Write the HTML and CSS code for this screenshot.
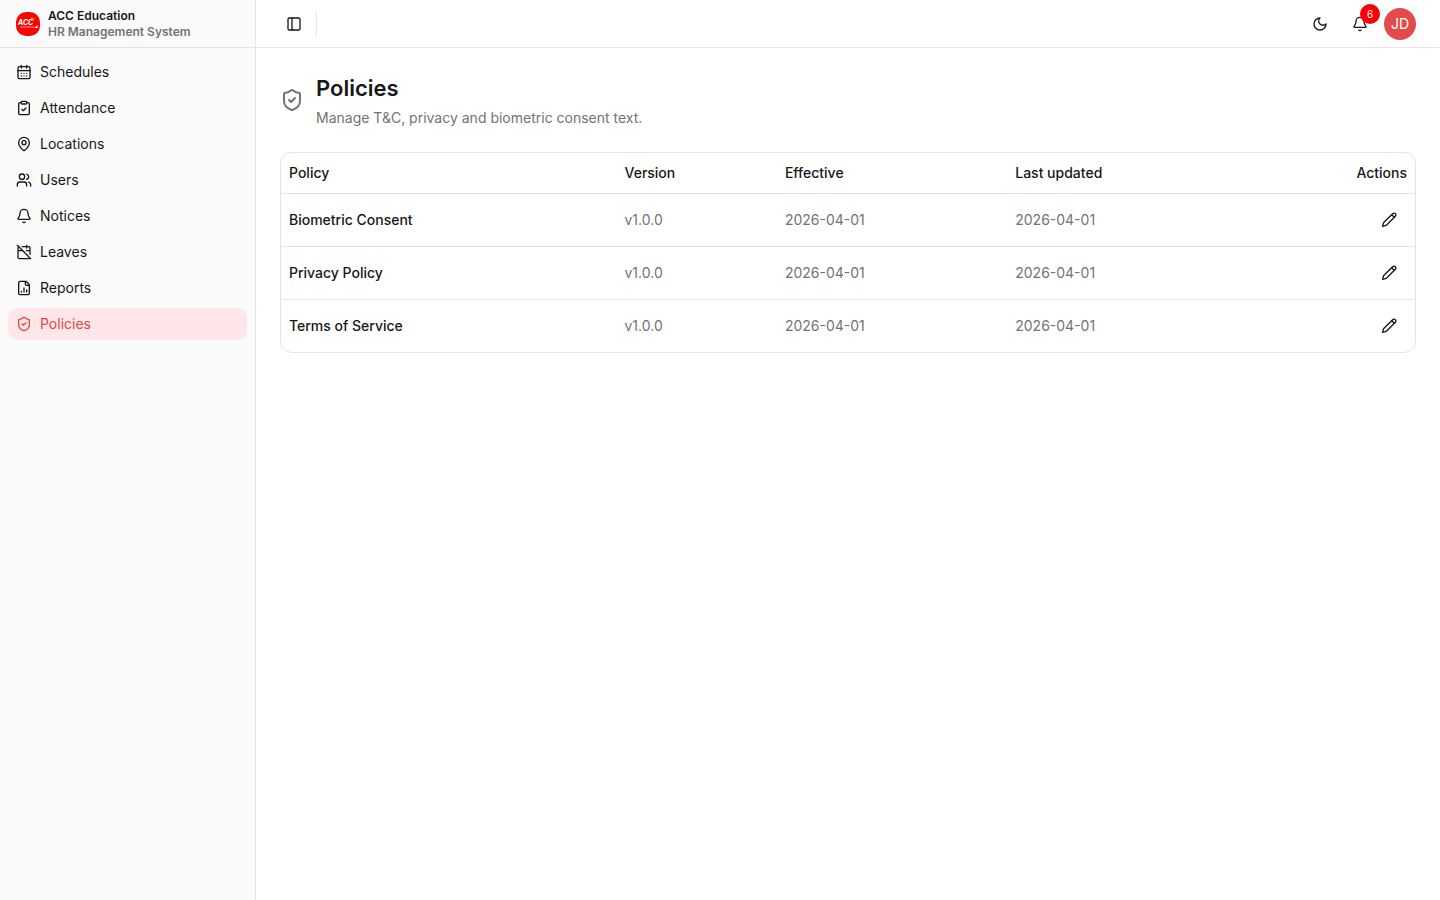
FILE: index.html
```
<!DOCTYPE html>
<html lang="en">
<head>
    <meta charset="UTF-8">
    <meta name="viewport" content="width=device-width, initial-scale=1.0">
    <title>Policies - ACC Education</title>
    <link rel="stylesheet" href="styles.css">
</head>
<body>
    <!-- shared icons -->
    <svg class="sprite" aria-hidden="true">
        <symbol id="bell" viewBox="0 0 24 24">
            <path d="M10.268 21a2 2 0 0 0 3.464 0"/>
            <path d="M3.262 15.326A1 1 0 0 0 4 17h16a1 1 0 0 0 .74-1.673C19.41 13.956 18 12.499 18 8A6 6 0 0 0 6 8c0 4.499-1.411 5.956-2.738 7.326"/>
        </symbol>
        <symbol id="shield" viewBox="0 0 24 24">
            <path d="M20 13c0 5-3.5 7.5-7.66 8.95a1 1 0 0 1-.67-.01C7.5 20.5 4 18 4 13V6a1 1 0 0 1 1-1c2 0 4.5-1.2 6.24-2.72a1.17 1.17 0 0 1 1.52 0C14.51 3.81 17 5 19 5a1 1 0 0 1 1 1z"/>
            <path d="m9 12 2 2 4-4"/>
        </symbol>
        <symbol id="pencil" viewBox="0 0 24 24">
            <path d="M21.500 2.500a2.800 2.800 0 0 0-4 0L4.500 15.500a4 4 0 0 0-1 1.800L2.500 21.500l4.200-1a4 4 0 0 0 1.800-1L21.500 6.500a2.800 2.800 0 0 0 0-4z"/>
            <path d="m16 4 4 4"/>
        </symbol>
    </svg>

    <aside class="sidebar">
        <a class="brand" href="#">
            <svg class="logo" viewBox="0 0 24 24" aria-hidden="true">
                <rect width="24" height="24" rx="10" fill="#f80505"/>
                <text x="2" y="13" class="logo_text">ACC</text>
                <path d="M14.500 5.500l4 1-2 3z" fill="#ffb000"/>
                <path d="M4.500 15h14" stroke="#ffb3b3" stroke-dasharray="1.500 .4"/>
                <path d="M18.500 16l3-3v3z" fill="#fff"/>
            </svg>
            <span class="brand_text">
                <span class="brand_name">ACC Education</span>
                <span class="brand_sub">HR Management System</span>
            </span>
        </a>
        <nav class="menu">
            <a href="#">
                <svg class="icon" viewBox="0 0 24 24"><path d="M8 2v4M16 2v4M3 10h18M8 14h.01M12 14h.01M16 14h.01M8 18h.01M12 18h.01M16 18h.01"/><rect width="18" height="18" x="3" y="4" rx="2"/></svg>
                Schedules
            </a>
            <a href="#">
                <svg class="icon" viewBox="0 0 24 24"><rect width="8" height="4" x="8" y="2" rx="1"/><path d="M16 4h2a2 2 0 0 1 2 2v14a2 2 0 0 1-2 2H6a2 2 0 0 1-2-2V6a2 2 0 0 1 2-2h2"/><path d="m9 14 2 2 4-4"/></svg>
                Attendance
            </a>
            <a href="#">
                <svg class="icon" viewBox="0 0 24 24"><path d="M20 10c0 4.993-5.539 10.193-7.399 11.799a1 1 0 0 1-1.202 0C9.539 20.193 4 14.993 4 10a8 8 0 0 1 16 0"/><circle cx="12" cy="10" r="3"/></svg>
                Locations
            </a>
            <a href="#">
                <svg class="icon" viewBox="0 0 24 24"><path d="M16 21v-2a4 4 0 0 0-4-4H6a4 4 0 0 0-4 4v2"/><circle cx="9" cy="7" r="4"/><path d="M22 21v-2a4 4 0 0 0-3-3.870M16 3.128a4 4 0 0 1 0 7.744"/></svg>
                Users
            </a>
            <a href="#">
                <svg class="icon"><use href="#bell"/></svg>
                Notices
            </a>
            <a href="#">
                <svg class="icon" viewBox="0 0 24 24"><path d="M4.200 4.200A2 2 0 0 0 3 6v14a2 2 0 0 0 2 2h14a2 2 0 0 0 1.820-1.180M21 15.500V6a2 2 0 0 0-2-2H9.500M16 2v4M3 10h7M21 10h-5.500M2 2l20 20"/></svg>
                Leaves
            </a>
            <a href="#">
                <svg class="icon" viewBox="0 0 24 24"><path d="M15 2H6a2 2 0 0 0-2 2v16a2 2 0 0 0 2 2h12a2 2 0 0 0 2-2V7Z"/><path d="M14 2v4a2 2 0 0 0 2 2h4M8 18v-1M12 18v-6M16 18v-3"/></svg>
                Reports
            </a>
            <a href="#" class="active" aria-current="page">
                <svg class="icon"><use href="#shield"/></svg>
                Policies
            </a>
        </nav>
    </aside>

    <div class="page">
        <header class="topbar">
            <div class="topbar_left">
                <button class="icon_button small" aria-label="Toggle sidebar">
                    <svg class="icon" viewBox="0 0 24 24"><rect width="18" height="18" x="3" y="3" rx="2"/><path d="M9 3v18"/></svg>
                </button>
                <span class="separator"></span>
            </div>
            <div class="topbar_right">
                <button class="icon_button medium" aria-label="Toggle theme">
                    <svg class="icon" viewBox="0 0 24 24"><path d="M12 3a6 6 0 0 0 9 9 9 9 0 1 1-9-9Z"/></svg>
                </button>
                <button class="icon_button medium" aria-label="Notifications">
                    <svg class="icon"><use href="#bell"/></svg>
                    <span class="badge">6</span>
                </button>
                <button class="avatar" aria-label="Account">JD</button>
            </div>
        </header>

        <main>
            <div class="heading">
                <svg class="icon large"><use href="#shield"/></svg>
                <div>
                    <h1>Policies</h1>
                    <p>Manage T&amp;C, privacy and biometric consent text.</p>
                </div>
            </div>

            <div class="table_box">
                <table>
                    <thead>
                        <tr>
                            <th>Policy</th>
                            <th>Version</th>
                            <th>Effective</th>
                            <th>Last updated</th>
                            <th class="actions">Actions</th>
                        </tr>
                    </thead>
                    <tbody>
                        <tr>
                            <td class="name">Biometric Consent</td>
                            <td>v1.0.0</td>
                            <td>2026-04-01</td>
                            <td>2026-04-01</td>
                            <td class="actions"><button class="icon_button" aria-label="Edit Biometric Consent"><svg class="icon"><use href="#pencil"/></svg></button></td>
                        </tr>
                        <tr>
                            <td class="name">Privacy Policy</td>
                            <td>v1.0.0</td>
                            <td>2026-04-01</td>
                            <td>2026-04-01</td>
                            <td class="actions"><button class="icon_button" aria-label="Edit Privacy Policy"><svg class="icon"><use href="#pencil"/></svg></button></td>
                        </tr>
                        <tr>
                            <td class="name">Terms of Service</td>
                            <td>v1.0.0</td>
                            <td>2026-04-01</td>
                            <td>2026-04-01</td>
                            <td class="actions"><button class="icon_button" aria-label="Edit Terms of Service"><svg class="icon"><use href="#pencil"/></svg></button></td>
                        </tr>
                    </tbody>
                </table>
            </div>
        </main>
    </div>
</body>
</html>
```
FILE: styles.css
```
* {
    box-sizing: border-box;
}

body {
    display: flex;
    min-height: 100vh;
    margin: 0;
    background-color: #fff;
    color: #171717;
    font-family: Inter, sans-serif;
    font-size: 14px;
    line-height: 20px;
}

a {
    color: inherit;
    text-decoration: none;
}

button {
    padding: 0;
    border: none;
    background: none;
    color: inherit;
    font: inherit;
    cursor: pointer;
}

.sprite {
    position: absolute;
    width: 0;
    height: 0;
}

.icon {
    flex-shrink: 0;
    width: 16px;
    height: 16px;
    fill: none;
    stroke: currentColor;
    stroke-width: 2;
    stroke-linecap: round;
    stroke-linejoin: round;
}

.icon.large {
    width: 24px;
    height: 24px;
    color: #737373;
}

/* sidebar */
.sidebar {
    flex: 0 0 256px;
    border-right: 1px solid #e5e5e5;
    background-color: #fafafa;
}

.brand {
    display: flex;
    align-items: center;
    gap: 8px;
    height: 48px;
    padding: 0 16px;
    border-bottom: 1px solid #e5e5e5;
    font-size: 12px;
    font-weight: 600;
    line-height: 16px;
}

.logo {
    width: 24px;
    height: 24px;
    fill: none;
}

.logo_text {
    fill: #fff;
    font-size: 7px;
    font-style: italic;
    font-weight: 700;
}

.brand_text {
    display: flex;
    flex-direction: column;
}

.brand_sub {
    color: #737373;
}

.menu {
    display: flex;
    flex-direction: column;
    gap: 4px;
    padding: 8px;
}

.menu a {
    display: flex;
    align-items: center;
    gap: 8px;
    height: 32px;
    padding: 0 8px;
    border-radius: 10px;
}

.menu .active {
    background-color: #ffe6e8;
    color: #e04848;
}

/* top bar */
.page {
    flex: 1;
    min-width: 0;
}

.topbar {
    display: flex;
    align-items: center;
    justify-content: space-between;
    height: 48px;
    padding: 0 24px;
    border-bottom: 1px solid #e5e5e5;
}

.topbar_left,
.topbar_right {
    display: flex;
    align-items: center;
    gap: 8px;
}

.icon_button {
    display: inline-flex;
    position: relative;
    align-items: center;
    justify-content: center;
    width: 36px;
    height: 36px;
    border-radius: 8px;
    vertical-align: middle;
}

.icon_button.medium {
    width: 32px;
    height: 32px;
}

.icon_button.small {
    width: 28px;
    height: 28px;
}

.separator {
    width: 1px;
    height: 24px;
    background-color: #e5e5e5;
}

.badge {
    position: absolute;
    top: -4px;
    right: -4px;
    width: 20px;
    height: 20px;
    border-radius: 50%;
    background-color: #fb0007;
    color: #fff;
    font-size: 10px;
}

.avatar {
    width: 32px;
    height: 32px;
    border-radius: 50%;
    background-color: #e34b4b;
    color: #fff;
}

/* content */
main {
    padding: 24px;
}

.heading {
    display: flex;
    align-items: center;
    gap: 12px;
    margin-bottom: 24px;
}

h1 {
    margin: 0 0 4px;
    font-size: 22px;
    font-weight: 600;
    line-height: 32px;
}

p {
    margin: 0;
    color: #737373;
}

.table_box {
    overflow: hidden;
    border: 1px solid #e5e5e5;
    border-radius: 12px;
}

table {
    width: 100%;
    border-collapse: collapse;
}

th {
    height: 40px;
    padding: 0 8px;
    font-weight: 500;
    text-align: left;
}

td {
    padding: 8px;
    color: #737373;
}

tbody tr {
    border-top: 1px solid #e5e5e5;
}

.name {
    color: #171717;
    font-weight: 500;
}

.actions {
    color: #171717;
    text-align: right;
}
```
